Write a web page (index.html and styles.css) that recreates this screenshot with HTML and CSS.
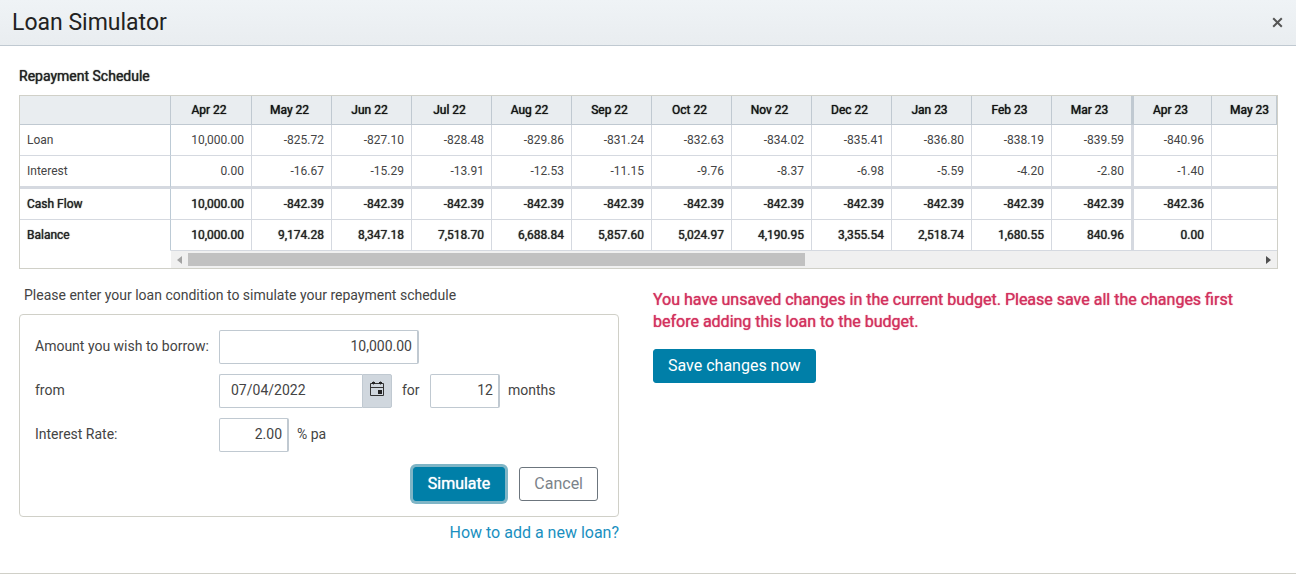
FILE: index.html
```
<!DOCTYPE html>
<html lang="en">
<head>
<meta charset="utf-8">
<title>Loan Simulator</title>
<link rel="stylesheet" href="styles.css">
</head>
<body>
<div class="dialog" role="dialog" aria-labelledby="dialog-title">
  <header class="dialog-header">
    <h1 class="dialog-title" id="dialog-title">Loan Simulator</h1>
    <button class="close" type="button" aria-label="Close"><svg width="11" height="11" viewBox="0 0 11 11"><path d="M1.2 1.2l8.6 8.6M9.8 1.2l-8.6 8.6" stroke="#555" stroke-width="2"/></svg></button>
  </header>
  <main class="dialog-body">
    <h2 class="section-title">Repayment Schedule</h2>
    <div class="grid">
      <div class="grid-view">
        <table class="schedule">
          <colgroup><col class="col-label"><col class="col-first"><col span="10"><col class="col-year-end"><col class="col-year-start"><col></colgroup>
          <thead>
            <tr><td></td><th scope="col">Apr 22</th><th scope="col">May 22</th><th scope="col">Jun 22</th><th scope="col">Jul 22</th><th scope="col">Aug 22</th><th scope="col">Sep 22</th><th scope="col">Oct 22</th><th scope="col">Nov 22</th><th scope="col">Dec 22</th><th scope="col">Jan 23</th><th scope="col">Feb 23</th><th scope="col" class="year-end">Mar 23</th><th scope="col">Apr 23</th><th scope="col">May 23</th></tr>
          </thead>
          <tbody>
            <tr><th scope="row">Loan</th><td>10,000.00</td><td>-825.72</td><td>-827.10</td><td>-828.48</td><td>-829.86</td><td>-831.24</td><td>-832.63</td><td>-834.02</td><td>-835.41</td><td>-836.80</td><td>-838.19</td><td class="year-end">-839.59</td><td>-840.96</td><td></td></tr>
            <tr class="group-end"><th scope="row">Interest</th><td>0.00</td><td>-16.67</td><td>-15.29</td><td>-13.91</td><td>-12.53</td><td>-11.15</td><td>-9.76</td><td>-8.37</td><td>-6.98</td><td>-5.59</td><td>-4.20</td><td class="year-end">-2.80</td><td>-1.40</td><td></td></tr>
            <tr class="total"><th scope="row">Cash Flow</th><td>10,000.00</td><td>-842.39</td><td>-842.39</td><td>-842.39</td><td>-842.39</td><td>-842.39</td><td>-842.39</td><td>-842.39</td><td>-842.39</td><td>-842.39</td><td>-842.39</td><td class="year-end">-842.39</td><td>-842.36</td><td></td></tr>
            <tr class="total last"><th scope="row">Balance</th><td>10,000.00</td><td>9,174.28</td><td>8,347.18</td><td>7,518.70</td><td>6,688.84</td><td>5,857.60</td><td>5,024.97</td><td>4,190.95</td><td>3,355.54</td><td>2,518.74</td><td>1,680.55</td><td class="year-end">840.96</td><td>0.00</td><td></td></tr>
          </tbody>
        </table>
      </div>
      <div class="scrollbar">
        <button class="scroll-arrow" type="button" aria-label="Scroll left"><svg width="5" height="8" viewBox="0 0 5 8"><path d="M5 0v8L0 4z" fill="#a3a3a3"/></svg></button>
        <div class="scroll-track"><div class="scroll-thumb"></div></div>
        <button class="scroll-arrow" type="button" aria-label="Scroll right"><svg width="5" height="8" viewBox="0 0 5 8"><path d="M0 0v8l5-4z" fill="#505050"/></svg></button>
      </div>
    </div>
    <div class="columns">
      <section class="conditions">
        <p class="intro">Please enter your loan condition to simulate your repayment schedule</p>
        <form class="panel">
          <div class="row">
            <label class="label" for="amount">Amount you wish to borrow:</label>
            <input class="input amount" id="amount" type="text" value="10,000.00">
          </div>
          <div class="row">
            <label class="label" for="start">from</label>
            <div class="date">
              <input class="input date-input" id="start" type="text" value="07/04/2022">
              <button class="date-button" type="button" aria-label="Choose date"><svg width="14" height="16" viewBox="0 0 14 16"><path d="M.5 2.500h13v12H.5zM.5 6.500h13M3.500 .5v3M10.500 .5v3" fill="none" stroke="#333"/><path d="M2 1h3v2H2zM9 1h3v2H9zM8 9h4v4H8z" fill="#222"/></svg></button>
            </div>
            <label class="for" for="term">for</label>
            <input class="input small" id="term" type="text" value="12">
            <span class="unit">months</span>
          </div>
          <div class="row">
            <label class="label" for="rate">Interest Rate:</label>
            <input class="input small" id="rate" type="text" value="2.00">
            <span class="unit">% pa</span>
          </div>
          <div class="actions">
            <button class="button primary focused" type="button">Simulate</button>
            <button class="button outline" type="button">Cancel</button>
          </div>
        </form>
        <a class="help" href="#">How to add a new loan?</a>
      </section>
      <section class="notice">
        <p class="warning">You have unsaved changes in the current budget. Please save all the changes first before adding this loan to the budget.</p>
        <button class="button primary" type="button">Save changes now</button>
      </section>
    </div>
  </main>
</div>
</body>
</html>
```
FILE: styles.css
```
* { box-sizing: border-box; }

body {
  margin: 0;
  background: #fff;
  color: #444;
  font: 14px/20px Roboto, "Liberation Sans", sans-serif;
}

button, input { font: inherit; color: inherit; }
h1, h2, p { margin: 0; }

.dialog {
  min-height: 100vh;
  border-bottom: 1px solid #d0d0c8;
}

.dialog-header {
  display: flex;
  align-items: center;
  justify-content: space-between;
  height: 46px;
  padding: 0 13px 0 12px;
  background: linear-gradient(#eff3f6, #e9edf0);
  border-bottom: 1px solid #c0c9d1;
}

.dialog-title {
  color: #222;
  font-size: 23px;
  font-weight: 400;
  line-height: 28px;
}

.close {
  display: flex;
  padding: 0;
  border: 0;
  background: none;
}

.dialog-body { padding: 20px 18px 0 19px; }

/* Semi-bold look that keeps the advance widths of the regular weight */
.section-title,
.schedule thead th,
.schedule .total th,
.schedule .total td,
.warning {
  font-weight: 400;
  text-shadow: 0 0 1px currentColor;
}

.section-title {
  margin-bottom: 9px;
  color: #222;
  font-size: 14px;
  line-height: 20px;
}

.grid {
  position: relative;
  border: 1px solid #d0d0c8;
}

.grid::after {
  content: "";
  position: absolute;
  top: 0;
  right: 0;
  width: 1px;
  height: 29px;
  background: #c0c9d1;
}

.grid-view { overflow: hidden; }

.schedule {
  width: 1272px;
  table-layout: fixed;
  border-collapse: separate;
  border-spacing: 0;
  font-size: 12px;
  line-height: 16px;
}

.schedule col { width: 80px; }
.schedule .col-label { width: 151px; }
.schedule .col-first { width: 81px; }
.schedule .col-year-end { width: 82px; }
.schedule .col-year-start { width: 78px; }

.schedule th, .schedule td {
  height: 31px;
  padding: 0 7px 0 3px;
  border: solid #d5d9e0;
  border-width: 0 1px 1px 0;
  font-weight: 400;
  text-align: right;
  white-space: nowrap;
}

.schedule thead th, .schedule thead td {
  height: 29px;
  background: #e9edf0;
  border-color: #c0c9d1;
  color: #111;
  text-align: center;
}

.schedule tbody th {
  padding-left: 7px;
  border-right-color: #bccad5;
  text-align: left;
}

.schedule .year-end { border-right-width: 3px; }
.schedule .group-end th, .schedule .group-end td { height: 33px; border-bottom-width: 3px; }
.schedule .total th, .schedule .total td { color: #222; }
.schedule .last th { border-bottom-color: transparent; }

.scrollbar {
  display: flex;
  height: 17px;
  margin-left: 151px;
  background: #f0f0f0;
}

.scroll-arrow {
  display: flex;
  flex: none;
  align-items: center;
  justify-content: center;
  width: 17px;
  padding: 0;
  border: 0;
  background: none;
}

.scroll-track { flex: 1; padding: 2px 0; }
.scroll-thumb { width: 57.600%; height: 13px; background: #c1c1c1; }

.columns { display: flex; gap: 34px; margin-top: 16px; }
.conditions { display: flex; flex-direction: column; flex: 0 0 600px; }
.intro { padding-left: 5px; }

.panel {
  display: flex;
  flex-direction: column;
  gap: 10px;
  margin-top: 9px;
  padding: 15px 20px 15px 15px;
  border: 1px solid #d0d0c8;
  border-radius: 4px;
}

.row { display: flex; align-items: center; }
.label, .for, .unit { padding-bottom: 2px; }
.label { width: 184px; }

.input {
  height: 34px;
  padding: 0 5px 2px 11px;
  border: 1px solid #c0c9d1;
  border-right-width: 2px;
  border-radius: 2px;
  background: #fff;
  text-align: right;
}

.amount { width: 200px; }
.small { width: 70px; }
.date { display: flex; width: 173px; }
.date-input { flex: 1; min-width: 0; border-right: 0; border-radius: 2px 0 0 2px; text-align: left; }

.date-button {
  display: flex;
  align-items: center;
  justify-content: center;
  width: 30px;
  padding: 0 0 4px;
  border: 1px solid #c0c9d1;
  border-radius: 0 2px 2px 0;
  background: #d0d7de;
}

.for { width: 38px; padding-left: 10px; }
.unit { padding-left: 8px; }

.actions {
  display: flex;
  justify-content: flex-end;
  gap: 14px;
  margin-top: 5px;
}

.button {
  height: 34px;
  padding: 0 14px;
  border: 1px solid #007fa8;
  border-radius: 3px;
  font-size: 16px;
  line-height: 24px;
}

.primary { background: #007fa8; color: #fff; }
.focused { box-shadow: 0 0 0 3px #7fb5c6; text-shadow: 0 0 1px currentColor; }
.outline { border-color: #6c757d; background: #fff; color: #7b838a; }

.help {
  align-self: flex-end;
  margin-top: 4px;
  color: #1a8fc0;
  font-size: 16px;
  line-height: 24px;
  text-decoration: none;
}

.notice { flex: 1; padding-top: 4px; }

.warning {
  max-width: 600px;
  margin-bottom: 16px;
  color: #d3325f;
  font-size: 16px;
  line-height: 22px;
}
```
